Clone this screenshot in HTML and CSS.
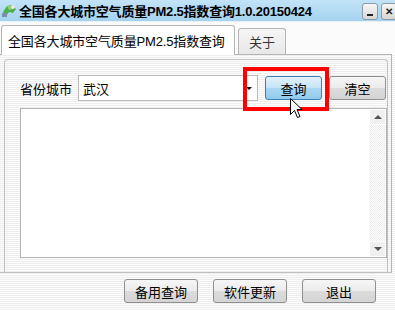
FILE: index.html
```html
<!DOCTYPE html>
<html lang="zh">
<head>
<meta charset="utf-8">
<link rel="stylesheet" href="styles.css">
</head>
<body>
<div class="window">
  <div class="titlebar">
    <svg class="app-icon" width="16" height="16" viewBox="0 0 16 16">
      <path d="M2 9 L6 3 L11 2 L15 6 L12 10 L8 9 L5 13 Z" fill="#4caf50"/>
      <path d="M6 3 L11 2 L12 6 L8 7 Z" fill="#8bd36a"/>
      <rect x="1" y="10" width="5" height="4" fill="#7b8fa8"/>
      <circle cx="12" cy="4" r="2" fill="#e8e8e8"/>
    </svg>
    <span class="title">全国各大城市空气质量PM2.5指数查询1.0.20150424</span>
    <div class="win-btns">
      <div class="win-btn"><span class="min-glyph"></span></div>
      <div class="win-btn close">✕</div>
    </div>
  </div>
  <div class="tabstrip">
    <div class="tab active">全国各大城市空气质量PM2.5指数查询</div>
    <div class="tab">关于</div>
  </div>
  <div class="tabpage">
    <div class="group">
      <div class="row">
        <span class="label">省份城市</span>
        <div class="combo">
          <span class="combo-text">武汉</span>
          <span class="combo-arrow"></span>
        </div>
        <div class="btn primary">查询</div>
        <div class="btn">清空</div>
      </div>
      <div class="textbox">
        <div class="text-area"></div>
        <div class="scrollbar">
          <div class="sb-btn"><span class="tri-up"></span></div>
          <div class="sb-track"></div>
          <div class="sb-btn"><span class="tri-down"></span></div>
        </div>
      </div>
    </div>
  </div>
  <div class="footer">
    <div class="btn wide">备用查询</div>
    <div class="btn wide">软件更新</div>
    <div class="btn wide">退出</div>
  </div>
  <div class="highlight"></div>
  <svg class="cursor" width="13" height="21" viewBox="0 0 13 21">
    <path d="M0.5 0.5 L0.5 16.5 L4.5 12.5 L7.5 19.5 L10 18.5 L7 11.5 L12 11.5 Z" fill="#fff" stroke="#000" stroke-width="1" stroke-linejoin="round"/>
  </svg>
</div>
</body>
</html>
```

FILE: styles.css
```css
html, body {
  margin: 0;
  padding: 0;
}
body {
  width: 395px;
  height: 310px;
  overflow: hidden;
  font-family: "Liberation Sans", "Noto Sans CJK SC", sans-serif;
  color: #000;
}
.window {
  position: relative;
  width: 395px;
  height: 310px;
  display: flex;
  flex-direction: column;
  background: repeating-linear-gradient(to bottom, #fcfcfc 0, #fcfcfc 1px, #eeeeee 1px, #eeeeee 2px);
}
.titlebar {
  height: 21px;
  display: flex;
  align-items: center;
  background: linear-gradient(#c2e3f7, #a4d2ef);
  padding-left: 1px;
  flex: none;
}
.app-icon {
  flex: none;
}
.title {
  margin-left: 2px;
  font-size: 13px;
  font-weight: bold;
  letter-spacing: -0.2px;
  white-space: nowrap;
}
.win-btns {
  margin-left: auto;
  display: flex;
  gap: 3px;
  margin-right: -2px;
  align-self: flex-start;
  margin-top: 3px;
}
.win-btn {
  width: 14px;
  height: 15px;
  border: 1px solid #8a9aa6;
  border-radius: 3px;
  background: linear-gradient(#f7f7f7, #d6d6d6);
  display: flex;
  align-items: center;
  justify-content: center;
  font-size: 10px;
  font-weight: bold;
  color: #222;
}
.min-glyph {
  width: 6px;
  height: 2px;
  background: #222;
  margin-top: 6px;
}
.tabstrip {
  height: 33px;
  flex: none;
  display: flex;
  align-items: flex-end;
  padding-left: 1px;
  background: #fbfbfb;
  border-top: 1px solid #e6f1f8;
  box-sizing: border-box;
}
.tab {
  font-size: 13px;
  white-space: nowrap;
  box-sizing: border-box;
  border: 1px solid #b4b4b4;
  border-bottom: none;
  border-radius: 3px 3px 0 0;
  display: flex;
  align-items: center;
}
.tab.active {
  width: 234px;
  height: 30px;
  padding: 0 0 0 6px;
  background: #fff;
  position: relative;
  top: 1px;
  letter-spacing: -0.15px;
}
.tab:not(.active) {
  width: 48px;
  height: 26px;
  margin-left: 3px;
  justify-content: center;
  color: #333;
  background: linear-gradient(#f6f6f6, #e8e8e8);
}
.tabpage {
  height: 219px;
  flex: none;
  width: 392px;
  box-sizing: border-box;
  border-top: 1px solid #b4b4b4;
  border-right: 1px solid #b4b4b4;
  border-bottom: 1px solid #c0c0c0;
  padding: 4px 3px 0 4px;
  display: flex;
  flex-direction: column;
}
.group {
  flex: 1;
  border: 1px solid #c2c2c2;
  border-bottom: none;
  border-radius: 4px 4px 0 0;
  padding: 15px 0 0 15px;
  display: flex;
  flex-direction: column;
}
.row {
  display: flex;
  align-items: center;
  height: 26px;
}
.label {
  font-size: 13px;
  width: 52px;
  margin-right: 6px;
  white-space: nowrap;
}
.combo {
  width: 180px;
  height: 26px;
  box-sizing: border-box;
  border: 1px solid #b9b9b9;
  background: #fff;
  display: flex;
  align-items: center;
  padding-left: 4px;
  margin-right: 7px;
}
.combo-text {
  font-size: 13px;
  flex: 1;
}
.combo-arrow {
  width: 0;
  height: 0;
  border-left: 3px solid transparent;
  border-right: 3px solid transparent;
  border-top: 3px solid #000;
  margin-right: 5px;
}
.btn {
  box-sizing: border-box;
  width: 57px;
  height: 24px;
  border: 1px solid #8f8f8f;
  border-radius: 3px;
  background: linear-gradient(#f6f6f6 0%, #ebebeb 50%, #dcdcdc 51%, #d4d4d4 100%);
  font-size: 13px;
  display: flex;
  align-items: center;
  justify-content: center;
  white-space: nowrap;
}
.btn.primary {
  border-color: #3c7fb1;
  background: linear-gradient(#e3f2fb 0%, #c4e4f7 50%, #a9d8f4 51%, #92cbee 100%);
  margin-right: 7px;
}
.textbox {
  margin-top: 7px;
  margin-left: 0;
  width: 367px;
  height: 150px;
  box-sizing: border-box;
  border: 1px solid #b4b4b4;
  background: #fff;
  display: flex;
}
.text-area {
  flex: 1;
}
.scrollbar {
  width: 17px;
  display: flex;
  flex-direction: column;
  background-color: #f4f4f4;
  background-image: conic-gradient(#ffffff 25%, #ececec 25% 50%, #ffffff 50% 75%, #ececec 75%);
  background-size: 2px 2px;
}
.sb-btn {
  height: 16px;
  flex: none;
  background: #f0f0f0;
  border: 1px solid #fff;
  box-sizing: border-box;
  display: flex;
  align-items: center;
  justify-content: center;
}
.sb-track {
  flex: 1;
}
.tri-up {
  width: 0;
  height: 0;
  border-left: 4px solid transparent;
  border-right: 4px solid transparent;
  border-bottom: 4px solid #555;
}
.tri-down {
  width: 0;
  height: 0;
  border-left: 4px solid transparent;
  border-right: 4px solid transparent;
  border-top: 4px solid #555;
}
.footer {
  flex: 1;
  display: flex;
  justify-content: flex-end;
  align-items: flex-start;
  gap: 15px;
  padding: 6px 19px 0 0;
}
.btn.wide {
  width: 74px;
  height: 24px;
}
.highlight {
  position: absolute;
  left: 243px;
  top: 67px;
  width: 86px;
  height: 44px;
  box-sizing: border-box;
  border: 4px solid #ff0000;
}
.cursor {
  position: absolute;
  left: 290px;
  top: 98px;
}
```
